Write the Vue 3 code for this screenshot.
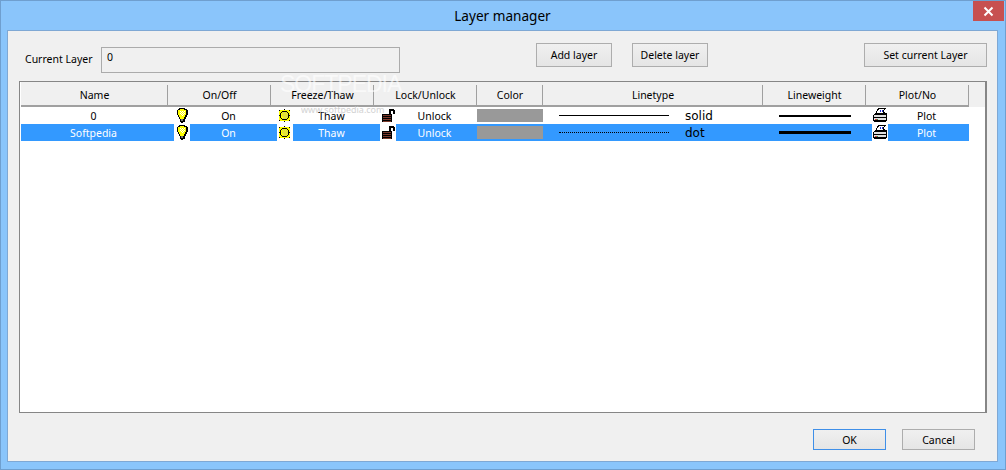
<script setup>
const columns = [
  { label: 'Name', cls: 'c-name' },
  { label: 'On/Off', cls: 'c-wide' },
  { label: 'Freeze/Thaw', cls: 'c-wide' },
  { label: 'Lock/Unlock', cls: 'c-wide' },
  { label: 'Color', cls: 'c-color' },
  { label: 'Linetype', cls: 'c-line' },
  { label: 'Lineweight', cls: 'c-wide' },
  { label: 'Plot/No', cls: 'c-wide' }
]
const rows = [
  { name: '0', type: 'solid', weight: 2, selected: false },
  { name: 'Softpedia', type: 'dot', weight: 3, selected: true }
]
</script>

<template>
  <div class="window">
    <header class="titlebar">
      <span class="title">Layer manager</span>
      <button class="close" aria-label="Close">
        <svg width="11" height="11" viewBox="0 0 11 11"><path d="M1.5 1.5 9.5 9.5M9.5 1.5 1.5 9.5" stroke="#fff" stroke-width="2" /></svg>
      </button>
    </header>
    <main class="panel">
      <div class="toolbar">
        <label class="label">Current Layer</label>
        <div class="input">0</div>
        <button class="btn add">Add layer</button>
        <button class="btn del">Delete layer</button>
        <button class="btn set">Set current Layer</button>
      </div>

      <section class="table">
        <div class="head">
          <div v-for="c in columns" :key="c.label" class="hcell" :class="c.cls">{{ c.label }}</div>
        </div>
        <div v-for="r in rows" :key="r.name" class="row" :class="{ selected: r.selected }">
          <div class="cell c-name"><span class="name">{{ r.name }}</span></div>
          <div class="cell c-wide icon-cell">
            <span class="icon">
              <svg width="16" height="17" viewBox="0 0 16 17" shape-rendering="crispEdges">
                <path d="M5 1h6v1h2v1h1v5h-1v2h-1v2h-1v3H9v1H7v-1H6v-3H5v-2H4V8H3V3h1V2h1z" fill="#000" />
                <path d="M6 2h4v1h2v5h-1v2h-1v2H6v-2H5V8H4V3h2z" fill="#ff0" />
                <path d="M6 4h1v1H6zM8 4h1v1H8zM10 4h1v1h-1zM7 5h1v1H7zM9 5h1v1H9zM6 6h1v1H6zM8 6h1v1H8zM10 6h1v1h-1zM7 7h1v1H7zM9 7h1v1H9zM8 8h1v1H8z" fill="#fff" />
                <path d="M7 12h2v2H7z" fill="#777" />
              </svg>
            </span>
            <span class="val">On</span>
          </div>
          <div class="cell c-wide icon-cell">
            <span class="icon">
              <svg width="16" height="17" viewBox="0 0 16 17" shape-rendering="crispEdges">
                <path d="M2 3h11v11H2z" fill="#ff0" />
                <path d="M5 4h5v1h1v1h1v5h-1v1h-1v1H5v-1H4v-1H3V6h1V5h1z" fill="#000" />
                <path d="M5 5h5v1h1v5h-1v1H5v-1H4V6h1z" fill="#ff0" />
                <path d="M6 5h1v1H6zM8 5h1v1H8zM5 6h1v1H5zM7 6h1v1H7zM9 6h1v1H9zM6 7h1v1H6zM8 7h1v1H8zM10 7h1v1h-1zM5 8h1v1H5zM7 8h1v1H7zM9 8h1v1H9zM6 9h1v1H6zM8 9h1v1H8zM10 9h1v1h-1zM7 10h1v1H7zM9 10h1v1H9zM6 11h1v1H6zM8 11h1v1H8z" fill="#c8c870" />
                <path d="M2 3h1v1H2zM7 2h1v1H7zM12 3h1v1h-1zM2 8h1v1H2zM12 8h1v1h-1zM2 13h1v1H2zM7 14h1v1H7zM12 13h1v1h-1z" fill="#000" />
              </svg>
            </span>
            <span class="val">Thaw</span>
          </div>
          <div class="cell c-wide icon-cell">
            <span class="icon">
              <svg width="16" height="17" viewBox="0 0 16 17" shape-rendering="crispEdges">
                <path d="M9 2h5v1h1v4h-2V4h-2v3H9V3z" fill="#000" />
                <path d="M2 7h10v8H2z" fill="#000" />
                <path d="M3 8h8v1H3zM3 10h8v1H3zM3 12h8v1H3zM3 14h8v1H3z" fill="#7c3a2c" />
              </svg>
            </span>
            <span class="val">Unlock</span>
          </div>
          <div class="cell c-color"><span class="swatch"></span></div>
          <div class="cell c-line">
            <span class="stroke" :class="r.type"></span>
            <span class="type">{{ r.type }}</span>
          </div>
          <div class="cell c-wide weight-cell">
            <span class="weight" :class="{ thick: r.weight === 3 }"></span>
          </div>
          <div class="cell c-wide icon-cell">
            <span class="icon">
              <svg width="16" height="17" viewBox="0 0 16 17" shape-rendering="crispEdges">
                <path d="M6 1h8v1h-1v1h-1v2h1v1h2v8h-1v1H2v-1H1V8h1V7h1V6h1V4h1V2h1z" fill="#000" />
                <path d="M7 2h5v1h-1v3H5V4h1V3h1z" fill="#fff" />
                <path d="M2 8h12v5H2z" fill="#e0e0e0" />
                <path d="M3 7h10v1H3zM2 10h12v1H2z" fill="#000" />
                <path d="M8 3h1v2H8zM10 3h1v2h-1z" fill="#2030d0" />
                <path d="M3 12h2v1H3z" fill="#d04040" />
                <path d="M5 12h1v1H5z" fill="#30a040" />
              </svg>
            </span>
            <span class="val">Plot</span>
          </div>
        </div>
      </section>

      <footer class="footer">
        <button class="btn ok">OK</button>
        <button class="btn cancel">Cancel</button>
      </footer>

      <div class="mark" aria-hidden="true">
        <span class="mark-big">SOFTPEDIA</span>
        <span class="mark-small">www.softpedia.com</span>
      </div>
    </main>
  </div>
</template>

<style>
html, body { margin: 0; overflow: hidden; }
</style>

<style scoped>
.window {
  box-sizing: border-box;
  width: 1006px;
  height: 470px;
  display: flex;
  flex-direction: column;
  background: #8ac5fb;
  border: 1px solid #6f9fcf;
  padding: 0 7px 7px 6px;
  font-family: "Noto Sans", "Open Sans", sans-serif;
  font-size: 10.5px;
  color: #000;
  overflow: hidden;
}
.titlebar {
  flex: 0 0 29px;
  display: flex;
  justify-content: center;
  position: relative;
}
.title {
  margin-top: 5px;
  font-size: 13.6px;
  line-height: 20px;
}
.close {
  position: absolute;
  top: 0;
  right: -6px;
  width: 31px;
  height: 20px;
  padding: 0;
  border: 0;
  background: #c75050;
  display: flex;
  align-items: center;
  justify-content: center;
}
.panel {
  flex: 1;
  position: relative;
  display: flex;
  flex-direction: column;
  background: #f0f0f0;
  border: 1px solid #7fa8d4;
}
.toolbar {
  display: flex;
  align-items: flex-start;
  height: 50px;
  padding: 12px 10px 0 17px;
  box-sizing: border-box;
}
.label {
  width: 76px;
  margin-top: 8px;
  line-height: 16px;
}
.input {
  box-sizing: border-box;
  width: 299px;
  height: 26px;
  margin-top: 4px;
  padding: 2px 5px;
  border: 1px solid #ababab;
  line-height: 14px;
}
.btn {
  box-sizing: border-box;
  height: 24px;
  padding: 0;
  border: 1px solid #adadad;
  background: linear-gradient(#f0f0f0, #e5e5e5);
  font: inherit;
  color: #000;
}
.add { width: 76px; margin-left: 136px; }
.del { width: 76px; margin-left: 20px; }
.set { width: 123px; margin-left: auto; }
.table {
  box-sizing: border-box;
  height: 332px;
  margin: 0 10px 0 11px;
  border: 1px solid #868686;
  border-right-width: 2px;
  padding: 1px 0 0 1px;
  background: #fff;
  overflow: hidden;
}
.head {
  display: flex;
  height: 25px;
  margin-top: -1px;
  padding-top: 1px;
  background: #f0f0f0;
  box-sizing: border-box;
}
.hcell {
  box-sizing: border-box;
  height: 24px;
  padding-top: 1px;
  display: flex;
  align-items: center;
  justify-content: center;
  border-bottom: 2px solid #a0a0a0;
  position: relative;
}
.hcell::after {
  content: "";
  position: absolute;
  right: 0;
  top: 2px;
  bottom: 0;
  width: 1px;
  background: #a0a0a0;
}
.c-name { width: 147px; }
.c-wide { width: 103px; }
.c-color { width: 66px; }
.c-line { width: 220px; }
.row {
  display: flex;
  width: 948px;
  height: 17px;
  background: #fff;
}
.row.selected {
  background: #3399ff;
  color: #fff;
}
.cell {
  box-sizing: border-box;
  height: 17px;
  display: flex;
  align-items: center;
  line-height: 17px;
}
.c-name.cell { justify-content: center; padding-right: 2px; }
.name, .val, .type { position: relative; top: 1px; }
.icon-cell { padding-left: 6px; }
.icon {
  width: 16px;
  height: 17px;
  background: #fff;
  flex: none;
}
.icon svg { display: block; }
.val {
  flex: 1;
  text-align: center;
  padding-right: 4px;
}
.c-color.cell { align-items: flex-start; padding-top: 2px; }
.swatch {
  display: block;
  width: 66px;
  height: 13px;
  background: #999;
}
.c-line.cell { padding-left: 16px; }
.stroke {
  width: 110px;
  height: 0;
  border-top: 1px solid #000;
}
.stroke.dot { border-top-style: dotted; }
.type {
  margin-left: 16px;
  font-family: "DejaVu Sans", sans-serif;
  font-size: 12px;
  color: #000;
}
.weight-cell { padding-left: 16px; }
.weight {
  width: 72px;
  height: 2px;
  margin-top: 1px;
  background: #000;
}
.weight.thick { height: 3px; margin-top: 0; }
.footer {
  display: flex;
  justify-content: flex-end;
  gap: 16px;
  padding: 16px 22px 0 0;
}
.footer .btn { width: 73px; height: 21px; }
.ok { border-color: #3f8fe8; }
.mark {
  position: absolute;
  left: 272px;
  top: 41px;
  display: flex;
  flex-direction: column;
  pointer-events: none;
}
.mark-big {
  font-family: "Liberation Sans", sans-serif;
  font-size: 23px;
  line-height: 24px;
  letter-spacing: -1px;
  color: #fff;
  opacity: 0.6;
}
.mark-small {
  margin: 8px 0 0 21px;
  font-size: 9px;
  line-height: 11px;
  color: #c8c8c8;
  opacity: 0.8;
}
</style>
